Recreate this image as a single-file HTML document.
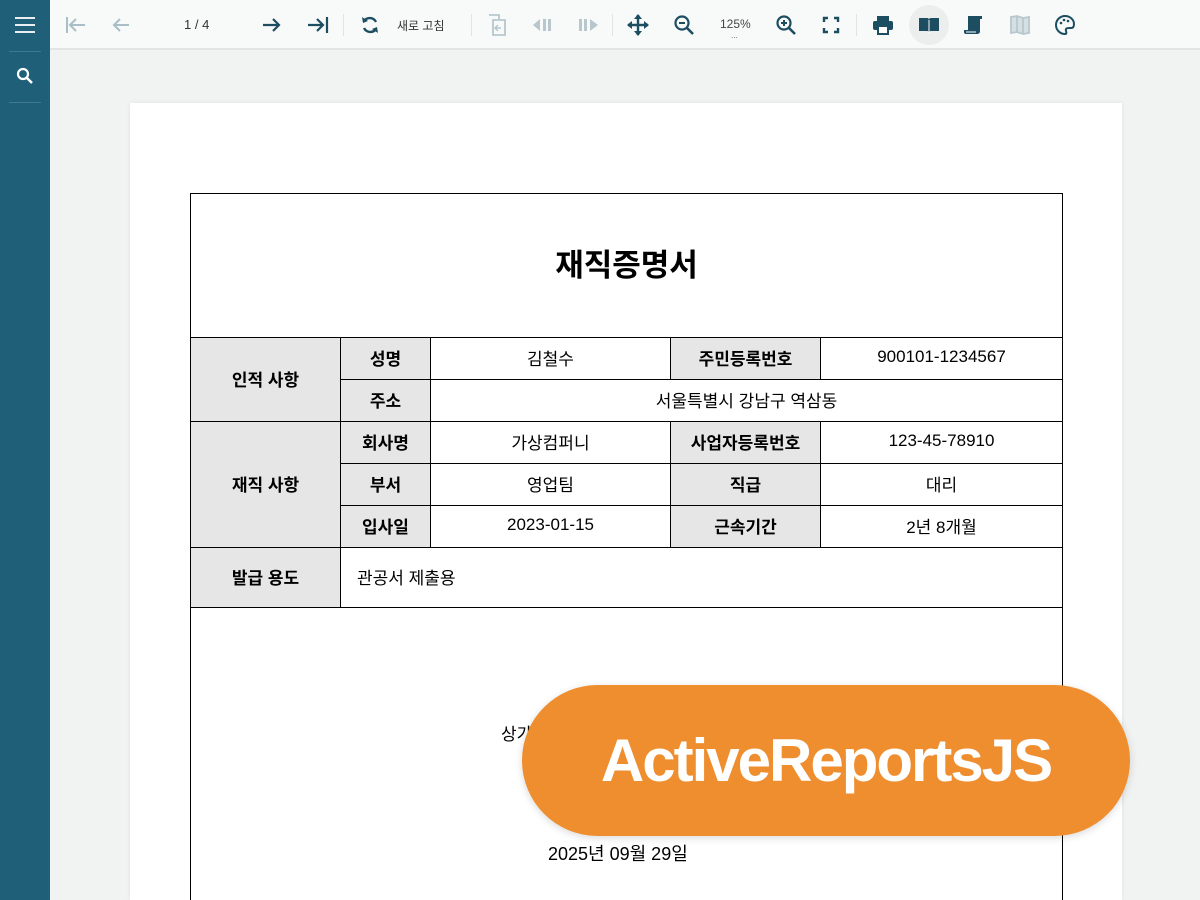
<!DOCTYPE html>
<html><head><meta charset="utf-8">
<style>
*{margin:0;padding:0;box-sizing:border-box}
html,body{width:1200px;height:900px;overflow:hidden}
body{background:#f1f2f2;font-family:"Liberation Sans","Noto Sans CJK KR",sans-serif;position:relative}
.side{position:absolute;left:0;top:0;width:50px;height:900px;background:#1f5f78}
.side .sep{position:absolute;left:9px;width:32px;height:1px;background:#3f7990}
.tb{position:absolute;left:50px;top:0;width:1150px;height:50px;background:#f8f9f9;border-bottom:2px solid #e3e5e5}
.ic{position:absolute;top:13px}
.vs{position:absolute;top:14px;width:1px;height:22px;background:#e2e4e4}
.page{position:absolute;left:130px;top:103px;width:992px;height:797px;background:#fff;box-shadow:0 0 4px rgba(0,0,0,.08)}
.box{position:absolute;left:190px;top:193px;width:873px;height:720px;border:1px solid #000}
.title{position:absolute;left:190px;top:240px;width:873px;text-align:center;font-size:31px;font-weight:bold;color:#000}
table{position:absolute;left:190px;top:337px;border-collapse:collapse;table-layout:fixed}
td{border:1px solid #000;font-size:17px;text-align:center;color:#000;height:42px;padding:0 0 3px 0}
td.h{background:#e6e6e6;font-weight:bold}
.pill{position:absolute;left:522px;top:685px;width:608px;height:151px;border-radius:76px;background:#ef8e2f;box-shadow:0 2px 8px rgba(0,0,0,.15);color:#fff;font-weight:bold;font-size:60px;text-align:center;line-height:151px;letter-spacing:-2px}
</style></head><body>
<div class="side">
<svg style="position:absolute;left:15px;top:16px" width="20" height="18"><path d="M0 2H20M0 9H20M0 16H20" stroke="#e8eef1" stroke-width="2"/></svg>
<div class="sep" style="top:51px"></div>
<svg style="position:absolute;left:16px;top:67px" width="18" height="18"><circle cx="7" cy="7" r="5" stroke="#fff" stroke-width="2.2" fill="none"/><path d="M11 11L16 16" stroke="#fff" stroke-width="2.5"/></svg>
<div class="sep" style="top:102px"></div>
</div>
<div class="tb">
<svg class="ic" style="left:14px" width="24" height="24"><path d="M3 4V20M21 12H6M12 6L6 12L12 18" stroke="#a9bfc7" stroke-width="2" fill="none"/></svg>
<svg class="ic" style="left:59px" width="24" height="24"><path d="M20 12H5M11 6L5 12L11 18" stroke="#a9bfc7" stroke-width="2" fill="none"/></svg>
<div style="position:absolute;left:134px;top:17px;font-size:13px;color:#333">1 / 4</div>
<svg class="ic" style="left:210px" width="24" height="24"><path d="M3 12H19M13 6L19 12L13 18" stroke="#1c4d60" stroke-width="2.2" fill="none"/></svg>
<svg class="ic" style="left:256px" width="24" height="24"><path d="M2 12H17M11 6L17 12L11 18M21 4V20" stroke="#1c4d60" stroke-width="2.2" fill="none"/></svg>
<div class="vs" style="left:293px"></div>
<svg class="ic" style="left:308px" width="24" height="24"><path d="M18 9A7 7 0 0 0 6 8M6 15A7 7 0 0 0 18 16" stroke="#1c4d60" stroke-width="2.4" fill="none"/><path d="M4 4L5 10L10 8Z M20 20L19 14L14 16Z" fill="#1c4d60"/></svg>
<div style="position:absolute;left:347px;top:17px;font-size:12px;color:#333">새로 고침</div>
<div class="vs" style="left:421px"></div>
<svg class="ic" style="left:436px" width="24" height="24"><path d="M3 2H13V6M7 7H19V22H7Z" stroke="#b7c7cd" stroke-width="1.8" fill="none"/><path d="M15 15H10M12 12L9 15L12 18" stroke="#b7c7cd" stroke-width="1.5" fill="none"/></svg>
<svg class="ic" style="left:481px" width="24" height="24"><path d="M2 12L9 6V18Z" fill="#b7c7cd"/><rect x="12" y="6" width="3" height="12" fill="#b7c7cd"/><rect x="17" y="6" width="3" height="12" fill="#b7c7cd"/></svg>
<svg class="ic" style="left:526px" width="24" height="24"><rect x="3" y="6" width="3" height="12" fill="#b7c7cd"/><rect x="8" y="6" width="3" height="12" fill="#b7c7cd"/><path d="M22 12L14 6V18Z" fill="#b7c7cd"/></svg>
<div class="vs" style="left:562px"></div>
<svg class="ic" style="left:576px" width="24" height="24"><path d="M12 2V22M2 12H22" stroke="#1c4d60" stroke-width="2.4"/><path d="M12 1L8 6H16ZM12 23L8 18H16ZM1 12L6 8V16ZM23 12L18 8V16Z" fill="#1c4d60"/></svg>
<svg class="ic" style="left:622px" width="24" height="24"><circle cx="10" cy="10" r="6.5" stroke="#1c4d60" stroke-width="2.2" fill="none"/><path d="M15 15L21 21" stroke="#1c4d60" stroke-width="2.6"/><path d="M7 10H13" stroke="#1c4d60" stroke-width="2"/></svg>
<div style="position:absolute;left:670px;top:17px;font-size:12px;color:#444">125%</div>
<div style="position:absolute;left:681px;top:31px;font-size:8px;color:#666">...</div>
<svg class="ic" style="left:724px" width="24" height="24"><circle cx="10" cy="10" r="6.5" stroke="#1c4d60" stroke-width="2.2" fill="none"/><path d="M15 15L21 21" stroke="#1c4d60" stroke-width="2.6"/><path d="M7 10H13M10 7V13" stroke="#1c4d60" stroke-width="2"/></svg>
<svg class="ic" style="left:769px" width="24" height="24"><path d="M5 9V5H9M15 5H19V9M19 15V19H15M9 19H5V15" stroke="#1c4d60" stroke-width="2.4" fill="none"/></svg>
<div class="vs" style="left:806px"></div>
<svg class="ic" style="left:821px" width="24" height="24"><rect x="6" y="3" width="12" height="5" fill="#1c4d60"/><rect x="2" y="8" width="20" height="9" rx="2" fill="#1c4d60"/><rect x="7" y="13" width="10" height="8" fill="#fff" stroke="#1c4d60" stroke-width="2"/></svg>
<div style="position:absolute;left:859px;top:5px;width:40px;height:40px;border-radius:20px;background:#eceeee"></div>
<svg class="ic" style="left:867px" width="24" height="24"><path d="M2 5H10Q12 5 12 7V20Q12 18 10 18H2Z M22 5H14Q12 5 12 7V20Q12 18 14 18H22Z" fill="#1c4d60"/><path d="M12 7V20" stroke="#fff" stroke-width="1"/></svg>
<svg class="ic" style="left:912px" width="24" height="24"><path d="M6 3H20V6H18V18Q18 21 15 21H4Q2 21 2 19V17H6Z" fill="#1c4d60"/><path d="M4 19H14" stroke="#fff" stroke-width="1"/></svg>
<svg class="ic" style="left:958px" width="24" height="24"><path d="M3 4L9 3L15 5L21 4V20L15 21L9 19L3 20Z M9 3V19M15 5V21" stroke="#b7c7cd" stroke-width="1.8" fill="#d5e0e4"/></svg>
<svg class="ic" style="left:1003px" width="24" height="24"><path d="M12 3A9 9 0 1 0 12 21Q14 21 13 18Q12 15 16 15H18Q21 15 21 11A9 8 0 0 0 12 3Z" stroke="#1c4d60" stroke-width="2" fill="none"/><circle cx="8" cy="10" r="1.3" fill="#1c4d60"/><circle cx="11" cy="7" r="1.3" fill="#1c4d60"/><circle cx="15" cy="8" r="1.3" fill="#1c4d60"/></svg>
</div>
<div class="page"></div>
<div class="box"></div>
<div class="title">재직증명서</div>
<table>
<colgroup><col style="width:150px"><col style="width:90px"><col style="width:240px"><col style="width:150px"><col style="width:242px"></colgroup>
<tr><td class="h" rowspan="2">인적 사항</td><td class="h">성명</td><td>김철수</td><td class="h">주민등록번호</td><td>900101-1234567</td></tr>
<tr><td class="h">주소</td><td colspan="3">서울특별시 강남구 역삼동</td></tr>
<tr><td class="h" rowspan="3">재직 사항</td><td class="h">회사명</td><td>가상컴퍼니</td><td class="h">사업자등록번호</td><td>123-45-78910</td></tr>
<tr><td class="h">부서</td><td>영업팀</td><td class="h">직급</td><td>대리</td></tr>
<tr><td class="h">입사일</td><td>2023-01-15</td><td class="h">근속기간</td><td>2년 8개월</td></tr>
<tr><td class="h" style="height:60px">발급 용도</td><td colspan="4" style="text-align:left;padding-left:16px">관공서 제출용</td></tr>
</table>
<div style="position:absolute;left:501px;top:720px;font-size:17px">상가</div>
<div style="position:absolute;left:548px;top:840px;font-size:18px">2025년 09월 29일</div>
<div class="pill">ActiveReportsJS</div>
</body></html>
